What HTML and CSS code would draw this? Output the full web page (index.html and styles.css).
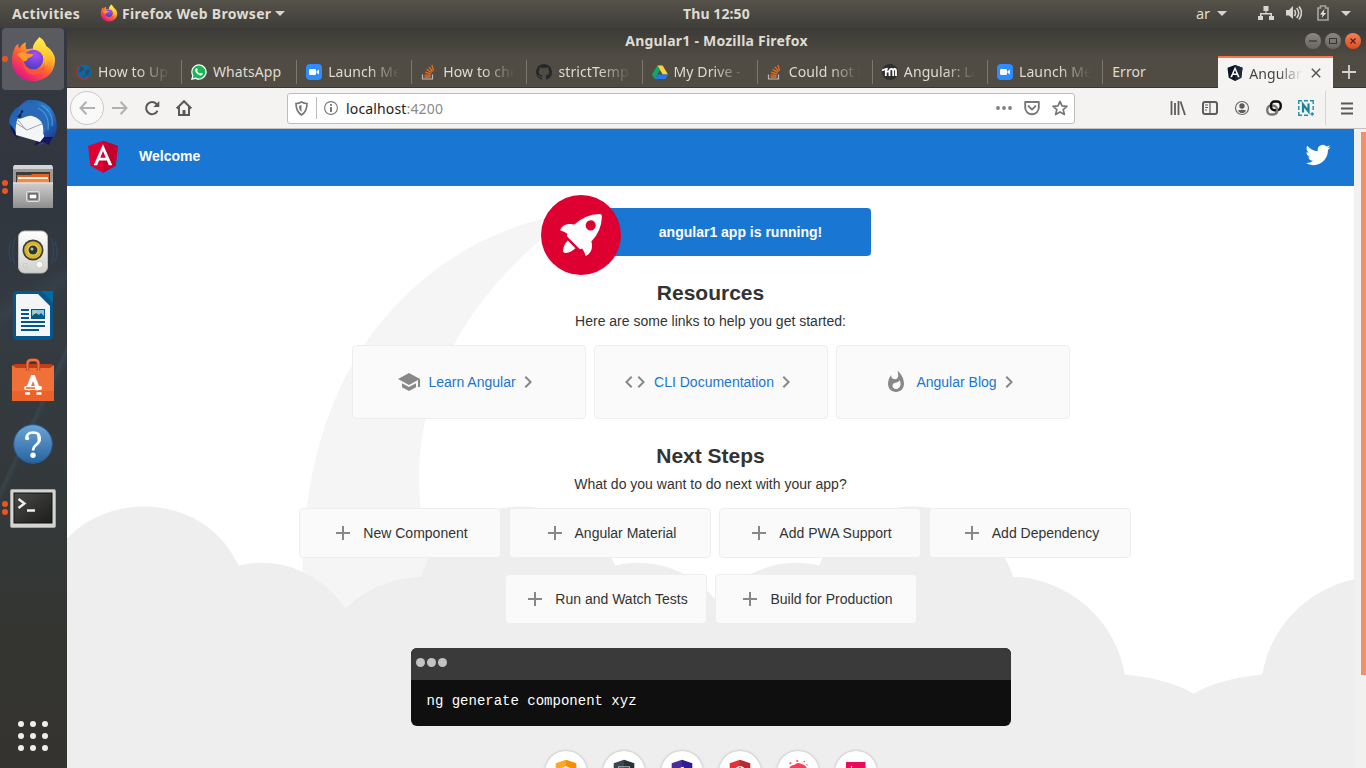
FILE: index.html
```html
<!DOCTYPE html>
<html lang="en">
<head>
<meta charset="utf-8">
<title>Angular1</title>
<link rel="stylesheet" href="styles.css">
</head>
<body>
<svg class="defs" width="0" height="0">
  <defs>
    <linearGradient id="ff-body" x1=".85" y1=".1" x2=".25" y2=".95"><stop offset="0" stop-color="#fff14a"/><stop offset=".3" stop-color="#ffb32c"/><stop offset=".6" stop-color="#ff5a36"/><stop offset="1" stop-color="#e31587"/></linearGradient>
    <linearGradient id="ff-flame" x1=".5" y1="0" x2=".5" y2="1"><stop offset="0" stop-color="#fff44f"/><stop offset=".6" stop-color="#ffc52c"/><stop offset="1" stop-color="#ff8a25"/></linearGradient>
    <radialGradient id="ff-globe" cx=".6" cy=".25" r=".8"><stop offset="0" stop-color="#a94dff"/><stop offset="1" stop-color="#4a3fb8"/></radialGradient>
    <linearGradient id="tb-blue" x1="0" y1="0" x2="1" y2="1"><stop offset="0" stop-color="#1a4d9a"/><stop offset=".5" stop-color="#2b7fd0"/><stop offset="1" stop-color="#1b2a80"/></linearGradient>
    <linearGradient id="metal" x1="0" y1="0" x2="0" y2="1"><stop offset="0" stop-color="#cfcfcf"/><stop offset="1" stop-color="#8e8e8e"/></linearGradient>
    <linearGradient id="white-box" x1="0" y1="0" x2="0" y2="1"><stop offset="0" stop-color="#fff"/><stop offset="1" stop-color="#cfcfcb"/></linearGradient>
    <linearGradient id="help-blue" x1="0" y1="0" x2="0" y2="1"><stop offset="0" stop-color="#6ba4d6"/><stop offset="1" stop-color="#2763a0"/></linearGradient>
    <linearGradient id="term" x1="0" y1="0" x2="1" y2="1"><stop offset="0" stop-color="#4a4a48"/><stop offset="1" stop-color="#1c1c1b"/></linearGradient>
    <symbol id="firefox" viewBox="0 0 48 48">
      <path fill="url(#ff-body)" d="M4.500 13C6 10 8 9 8.500 8.500c0 2 .2 3.500.8 5 2-3.500 5-6 7-6.500-.8 2.500-.5 5 .5 7L25 13 30 1.500c5 3 6 7 7.500 10 3 1 7 6 8.300 11 1.500 14-8.500 24-22 24C11.500 46.500 2 37.500 2 26c0-5 1-9 2.500-13z"/>
      <path fill="url(#ff-flame)" d="M30 1.500c-1.500 2.500-7.500 7-6.500 13 4 0 8 2 9.500 6 2.500 6-1 12-6 14 9-1 14-7 13.800-14 2 2 2.500 4 2.700 6 1-7-3-13-6-15-3-2-7-5.500-7.500-10z"/>
      <circle cx="24" cy="24.500" r="10" fill="url(#ff-globe)"/>
      <path fill="#ff9a27" d="M7 20c3-3 7-3.500 9.500-1.800 1 .5 5 .6 7.500 1-.3 2-4 3.500-6 4.200 0 2-2 3-4.500 3-2-3-4-5-6.500-6.400z"/>
      <path fill="#ff5a36" opacity=".75" d="M13.500 26c1 6 6 9.500 12 9 6-.3 9-4 9.500-8 2 8-4 14-12 13-7-1-10-8-9.500-14z"/>
    </symbol>
    <symbol id="zoomus" viewBox="0 0 16 16"><rect width="16" height="16" rx="4" fill="#2d8cff"/><rect x="3" y="5" width="7" height="6" rx="1.300" fill="#fff"/><path d="M10.500 7.300 13 5.500v5l-2.500-1.800z" fill="#fff"/></symbol>
    <symbol id="overflow" viewBox="0 0 16 16"><path d="M1.500 10.500V15h10v-4.500" fill="none" stroke="#bcbbb8" stroke-width="1.200"/><g stroke="#f06a14" stroke-width="1.300"><path d="M3.500 13h6M3.600 10.800l6 .6M4.200 8.200l5.700 1.700M5.700 5.400l5 3.100M8 2.900l3.500 4.700M10.800 1l1.800 5.600"/></g></symbol>
    <symbol id="plus" viewBox="0 0 24 24"><path fill="#888" d="M19 13h-6v6h-2v-6H5v-2h6V5h2v6h6v2z"/></symbol>
    <symbol id="chevron" viewBox="0 0 24 24"><path fill="#888" d="M10 6L8.590 7.410 13.170 12l-4.580 4.590L10 18l6-6z"/></symbol>
  </defs>
</svg>

<header class="topbar">
  <div class="top-left">
    <span class="activities">Activities</span>
    <span class="app-menu"><svg width="18" height="18"><use href="#firefox"/></svg><span class="app-name">Firefox Web Browser</span><i class="caret"></i></span>
  </div>
  <span class="clock">Thu 12:50</span>
  <div class="status">
    <span class="lang">ar</span><i class="caret"></i>
    <svg class="s-net" width="16" height="16" fill="#d8d6d2"><path d="M5.500 1h5v5h-2v2H14v3h2v4h-5v-4h1.500V9.500h-9V11H5v4H0v-4h2V8h5.500V6h-2z"/></svg>
    <svg class="s-vol" width="16" height="16" fill="#d8d6d2"><path d="M0 5h3l4-4v13L3 10.500H0z"/><path d="M8.500 5q2 3 0 6M10.700 3q4 5 0 10M13 1.500q5 6 0 13" fill="none" stroke="#d8d6d2" stroke-width="1.500"/></svg>
    <svg class="s-bat" width="12" height="16"><path d="M1 3h2.500V1h5v2H11v12H1z" fill="none" stroke="#a5a39d" stroke-width="1.700"/><path d="M7.500 4 3 9.500h2.500L4.500 13 9.200 8H6.700z" fill="#e6e4e0"/></svg>
    <i class="caret"></i>
  </div>
</header>

<div class="desktop">
  <nav class="dock">
    <div class="app active one"><svg width="47" height="48"><use href="#firefox"/></svg></div>
    <div class="app"><svg width="50" height="50" viewBox="0 0 50 50">
      <path fill="url(#tb-blue)" d="M12 8C16 3 20 1 22 2c13-1 25 7 26.500 22C50 34 46 39 42 46l-6-1-5 3 1-8-22-5C2 32 0 24 2 19 5 12 9 9 12 8z"/>
      <path fill="#1b1658" d="M2 26c1 8 5 12 8 15l-1-6zM31 39l-5 9 9-4 6 3 4-8z"/>
      <path fill="#f4f5f7" d="M10 19c5 0 8-3 13-4l13 6v18l-4 5-24-7c-1-6 0-12 2-18z"/>
      <path d="M8 25l11 7 17-7M10 22l8 10" fill="none" stroke="#9ca0a7" stroke-width="1"/>
      <path fill="#2a68b8" d="M12 8c4-4 11-5 15-1 9 1 14 7 14 15 0 6-3 11-6 15 1-9 0-16-11-19-5-1-8 3-15 3 0-5 1-9 3-13z"/><circle cx="14" cy="13.500" r="1.300" fill="#071b49"/><path d="M9 19l5-6-1 7z" fill="#14243f"/>
      <path d="M30 10q12 6 10 22M33 7q13 7 11 21" stroke="#3f9ddc" fill="none" stroke-width="1.200"/></svg></div>
    <div class="app two"><svg width="44" height="46" viewBox="0 0 44 46">
      <path d="M2 2h40v42H2z" fill="#9a9a9a"/><path d="M3 1h38l1 4H2z" fill="#d4d4d4"/><rect x="5" y="8" width="34" height="12" fill="#3c3b38"/>
      <path d="M6 11h14l1-1h17v9H6z" fill="#e2641f"/><path d="M7 13h30v6H7z" fill="#f7efe4"/><path d="M6 15h32v4H6z" fill="#f08a42"/>
      <path d="M2 18.500h40V44H2z" fill="url(#metal)"/><path d="M2 19h40" stroke="#e8e8e8"/><rect x="15.500" y="27.500" width="13" height="10" rx="1.500" fill="#a8a8a8" stroke="#ddd"/><rect x="18" y="30" width="8" height="5" fill="#fff" stroke="#333"/></svg></div>
    <div class="app"><svg width="50" height="44" viewBox="0 0 50 44">
      <path d="M7 8q-5 14 0 27M3 11q-4 11 0 21M43 8q5 14 0 27M47 11q4 11 0 21" fill="none" stroke="#315d87" stroke-width="1.300" opacity=".4"/>
      <rect x="10.500" y="1" width="29" height="42" rx="6" fill="url(#white-box)" stroke="#b9b9b5"/><circle cx="25" cy="20" r="10.500" fill="#3c3c3b"/><circle cx="25" cy="20" r="8.800" fill="#d5b52d"/><circle cx="25" cy="20" r="5.500" fill="#efe05f"/><circle cx="25" cy="20" r="4.500" fill="#2f3434"/><circle cx="24" cy="19" r="1.500" fill="#b2c0c5"/><circle cx="31.500" cy="34.500" r="3.500" fill="#f8f8f6" stroke="#ccc"/><rect x="15.500" y="33.500" width="4" height="4" fill="none" stroke="#ccc"/></svg></div>
    <div class="app"><svg width="40" height="49" viewBox="0 0 40 49">
      <path d="M3 0h25l12 12v33q0 4-4 4H4q-4 0-4-4V3q0-3 3-3z" fill="#04568f"/><path d="M28 0h12v12z" fill="#0369a3"/><path d="M4 3h21l12 12v30H3V4z" fill="#f3f5f6"/><g fill="#04568f"><path d="M8 18h8v2H8zM8 22h8v2H8zM8 26h8v2H8zM8 30h24v2H8zM8 34h24v2H8zM8 38h18v2H8z"/><path d="M18 18h14v10H18z"/></g><path d="M19 19h12v8H19z" fill="#86c8ec"/><path d="M19 27v-2l4-3 3 2 2-2 3 3v2z" fill="#075a80"/><circle cx="22" cy="21" r="1.300" fill="#f7d13b"/></svg></div>
    <div class="app"><svg width="42" height="44" viewBox="0 0 42 44">
      <path d="M0 8l3-2h36l3 2v4H0z" fill="#c23e16"/><path d="M0 7l4 3h34l4-3v36H0z" fill="#f0703a"/><path d="M0 33h42v10H0z" fill="#ed6228"/><path d="M15.500 13V6q0-4 4-4h3q4 0 4 4v7" fill="none" stroke="#b8401b" stroke-width="3.400"/><path d="M15.500 13V6q0-4 4-4h3q4 0 4 4v7" fill="none" stroke="#f07646" stroke-width="1.800"/>
      <path d="M15.500 32l5-13h1l5 13" fill="none" stroke="#fff" stroke-width="3.800"/><path d="M14 30h14" stroke="#fff" stroke-width="4" stroke-linecap="round"/><path d="M14 30h9" stroke="#f06b35" stroke-width="1.600"/><path d="M13 35.500h5M24.500 35.500h5" stroke="#fff" stroke-width="2.600"/></svg></div>
    <div class="app"><svg width="40" height="40" viewBox="0 0 40 40"><circle cx="20" cy="20" r="19.300" fill="url(#help-blue)" stroke="#285d93"/><path d="M13.500 15.500q-.5-7 6.800-7 6.500 0 6.500 6 0 3.600-3.500 6.200-3.300 2.600-3.200 5.800" fill="none" stroke="#fff" stroke-width="2.600"/><circle cx="14.200" cy="14.200" r="2" fill="#fff"/><path d="M24 9.500q3.800 1.500 3.700 5.200-.2 3-2.700 5.300z" fill="#fff"/><circle cx="20" cy="31.300" r="2.700" fill="#fff"/></svg></div>
    <div class="app two"><svg width="46" height="39" viewBox="0 0 46 39"><rect x=".5" y=".5" width="45" height="38" rx="1.500" fill="#d4d4d1" stroke="#a4a4a0"/><rect x="4" y="4" width="38" height="30" fill="url(#term)" stroke="#111"/><path d="M8.500 10l6 4.500-6 4.500M17 21.500h8" fill="none" stroke="#f0f0ee" stroke-width="2.300"/></svg></div>
    <div class="grid-btn"><i></i><i></i><i></i><i></i><i></i><i></i><i></i><i></i><i></i></div>
  </nav>

  <section class="window">
    <div class="titlebar"><span class="win-title">Angular1 - Mozilla Firefox</span>
      <div class="win-buttons"><b><svg width="16" height="16"><path d="M4 8h8" stroke="#35342f" stroke-width="1.200"/></svg></b><b><svg width="16" height="16"><rect x="4.500" y="5.500" width="7" height="5" fill="none" stroke="#35342f"/></svg></b><b class="close"><svg width="16" height="16"><path d="M5.500 5.500l5 5m0-5l-5 5" stroke="#45281c" stroke-width="1.200"/></svg></b></div>
    </div>
    <div class="tabs">
      <div class="tab first"><svg width="16" height="16"><circle cx="8.500" cy="8" r="7.200" fill="#0b69a8"/><path d="M4 3q3-1 4 1T5 8 3 7M10 6q4-2 4 1t-3 5q-3-2-1-6M6 10l3 2-1 2z" fill="#2b4c63"/><path d="M5.500 1A7.400 7.400 0 0 0 8 15.300q3 0 5-1.500" fill="none" stroke="#c0272d" stroke-width="1.200"/></svg><span>How to Upd</span></div>
      <div class="tab"><svg width="16" height="16"><path d="M8 .2A7.800 7.800 0 1 1 4.500 15L0 16l1.200-4.300A7.800 7.800 0 0 1 8 .2z" fill="#fff"/><path d="M8 1.400A6.500 6.500 0 1 1 4.700 13.600L1.700 14.300l.8-2.900A6.500 6.500 0 0 1 8 1.400z" fill="#14b955"/><path d="M5.700 4.200c.6 0 .8.900 1 1.600.2.500-.3.800-.6 1.200.7 1.300 1.500 2 2.800 2.500.5-.5.700-1 1.200-.8l1.600.8c.3.900-1 2-2 2C7 11.300 4.300 8.300 4.200 6.300c0-1 .7-2.100 1.500-2.100z" fill="#fff"/></svg><span>WhatsApp</span></div>
      <div class="tab"><svg width="16" height="16"><use href="#zoomus"/></svg><span>Launch Mee</span></div>
      <div class="tab"><svg width="16" height="16"><use href="#overflow"/></svg><span>How to che</span></div>
      <div class="tab"><svg width="16" height="16"><path fill="#24292e" d="M8 0C3.580 0 0 3.580 0 8c0 3.540 2.290 6.530 5.470 7.590.4.070.55-.17.55-.38 0-.19-.01-.82-.01-1.490-2.010.37-2.530-.49-2.690-.94-.09-.23-.48-.94-.82-1.130-.28-.15-.68-.52-.01-.53.63-.01 1.080.58 1.230.82.72 1.210 1.870.87 2.330.66.07-.52.28-.87.51-1.070-1.780-.2-3.640-.89-3.640-3.950 0-.87.31-1.590.82-2.150-.08-.2-.36-1.020.08-2.120 0 0 .67-.21 2.200.82a7.640 7.640 0 0 1 4 0c1.530-1.040 2.200-.82 2.200-.82.44 1.100.16 1.920.08 2.120.51.56.82 1.270.82 2.150 0 3.070-1.870 3.750-3.650 3.950.29.25.54.73.54 1.480 0 1.070-.01 1.930-.01 2.200 0 .21.15.46.55.38A8.010 8.010 0 0 0 16 8c0-4.420-3.580-8-8-8z"/></svg><span>strictTempl</span></div>
      <div class="tab"><svg width="16" height="16"><path d="M5.400 1.500h5.200L16 10.500h-5.300z" fill="#ffcf48"/><path d="M5.400 1.500 8 6 2.700 15 0 10.500z" fill="#11a861"/><path d="M5.400 10.500H16L13.300 15H2.700z" fill="#2679e8"/></svg><span>My Drive - G</span></div>
      <div class="tab"><svg width="16" height="16"><use href="#overflow"/></svg><span>Could not f</span></div>
      <div class="tab"><svg width="16" height="16"><circle cx="8" cy="8" r="8" fill="#302f2d"/><path d="M0 6.500 5 4.500M3.800 12V7q0-2 2-2.500M4.500 7.500h3M7.500 12V7q0-2 1.800-2t1.900 2v5M11.200 7q0-2 1.400-2t1.400 2v5" fill="none" stroke="#fff" stroke-width="1.800"/></svg><span>Angular: La</span></div>
      <div class="tab"><svg width="16" height="16"><use href="#zoomus"/></svg><span>Launch Mee</span></div>
      <div class="tab error"><span>Error</span></div>
      <div class="tab selected"><svg width="16" height="16" viewBox="0 0 16 16"><path d="M8 0l7.500 2.700-1.200 10L8 16l-6.300-3.300-1.200-10z" fill="#0c1422"/><path d="M8 0l7.500 2.700-1.200 10L8 16z" fill="#1c2938"/><path fill="#fff" d="M8 1.800l4.700 10.500h-1.800l-.9-2.400H6l-.9 2.400H3.300zM8 5 6.600 8.400h2.800z"/></svg><span>Angular</span><svg class="x" width="10" height="10"><path d="M.8.8l8.400 8.400m0-8.400L.8 9.200" stroke="#555" stroke-width="1.500"/></svg></div>
      <div class="newtab"><svg width="14" height="14"><path d="M7 0v14M0 7h14" stroke="#d6d4cf" stroke-width="1.800"/></svg></div>
    </div>
    <div class="navbar">
      <div class="cell back"><svg width="16" height="14" fill="none" stroke="#b2b1b0" stroke-width="2"><path d="M16 7H1.500M7.500.8 1.500 7l6 6.200"/></svg></div>
      <div class="cell"><svg width="16" height="14" fill="none" stroke="#b2b1b0" stroke-width="2"><path d="M0 7h14.500M8.500.8l6 6.200-6 6.200"/></svg></div>
      <div class="cell"><svg width="16" height="16"><path d="M13.500 10.800A6 6 0 1 1 12.500 4L14 5.500" fill="none" stroke="#5a5957" stroke-width="2"/><path d="M15.300 1v6H9.300z" fill="#5a5957"/></svg></div>
      <div class="cell"><svg width="16" height="16" fill="none" stroke="#5a5957" stroke-width="2"><path d="M.7 8.500 8 1.200l7.300 7.300M3 7v8h10V7"/><path d="M8 14v-4" stroke-width="3"/></svg></div>
      <div class="urlbar">
        <svg class="u-shield" width="13" height="15"><path d="M6.500 1q2.500 1.500 5.500 1.500 0 8-5.500 11.500Q1 10.500 1 2.500 4 2.500 6.500 1z" fill="none" stroke="#777" stroke-width="1.700"/><path d="M6.500 4v7q-2.500-2-2.700-6z" fill="#777"/></svg>
        <i class="u-sep"></i>
        <svg class="u-info" width="14" height="14"><circle cx="7" cy="7" r="6.400" fill="none" stroke="#777" stroke-width="1.100"/><path d="M6 3h2v1.800H6zM6 6h2v5H6z" fill="#777"/></svg>
        <span class="url">localhost<em>:4200</em></span>
        <svg width="16" height="16" fill="#808080"><circle cx="2" cy="8" r="1.900"/><circle cx="8" cy="8" r="1.900"/><circle cx="14" cy="8" r="1.900"/></svg>
        <svg width="16" height="15" fill="none" stroke="#777" stroke-width="1.900"><path d="M1.200 1h13.600v5.500a6.800 6.800 0 0 1-13.600 0zM4.500 5.200 8 8.700l3.500-3.500" stroke-linejoin="round" stroke-linecap="round"/></svg>
        <svg width="16" height="16"><path d="M8 1.300l2 4.600 5 .4-3.800 3.300 1.200 4.900L8 11.900l-4.400 2.600 1.200-4.900L1 6.300l5-.4z" fill="none" stroke="#777" stroke-width="1.700" stroke-linejoin="round"/></svg>
      </div>
      <div class="tools">
        <div class="cell"><svg width="16" height="16"><path d="M1.500 1v14M5 3v12M8.500 1v14M10.500 1.500 15 15" stroke="#5d5c5a" stroke-width="1.800"/></svg></div>
        <div class="cell"><svg width="16" height="16"><rect x="1" y="2" width="14" height="12" rx="2" fill="none" stroke="#5d5c5a" stroke-width="2"/><path d="M8 2v12M3 5h3M3 7.500h3M3 10h2" stroke="#5d5c5a" stroke-width="1.200"/></svg></div>
        <div class="cell"><svg width="16" height="16"><circle cx="8" cy="8" r="6.500" fill="none" stroke="#6d6c6a" stroke-width="1.200"/><circle cx="8" cy="6" r="2.700" fill="#5d5c5a"/><path d="M4 10.200q4-.8 8 0-1 2.800-4 2.800t-4-2.800z" fill="#5d5c5a"/></svg></div>
        <div class="cell"><svg width="16" height="16" fill="none" stroke-width="2.400"><rect x="1.300" y="5.800" width="9.700" height="8.700" rx="3.500" stroke="#777"/><rect x="5" y="1.500" width="9.700" height="8.700" rx="3.500" stroke="#0d0d0d"/><path d="M11 8v3.200q-.2 1.500-1 2.300" stroke="#777"/></svg></div>
        <div class="cell"><svg width="16" height="16"><path d="M.8 4V.8H4M6 .8h4M12 .8h3.200V4M.8 6v4M.8 12v3.200H4M6 15.200h4M15.200 6v4M12.500 14h3.500M14.200 12.200v3.600" fill="none" stroke="#1594a7" stroke-width="1.400"/><path d="M5 12.500V4.500l5.500 7v-8" fill="none" stroke="#1b8299" stroke-width="2.200"/></svg></div>
        <i class="t-sep"></i>
        <div class="cell"><svg width="12" height="13"><path d="M0 1.500h12M0 6.500h12M0 11.500h12" stroke="#5a5957" stroke-width="1.900"/></svg></div>
      </div>
    </div>

    <div class="viewport">
      <main class="page">
        <svg class="clouds" width="1920" height="486" viewBox="0 0 2611.084 485.677"><path transform="translate(142.690 -634.312)" fill="#eee" d="M2379.709,863.793c10-93-77-171-168-149-52-114-225-105-264,15-75,3-140,59-152,133-30,2.830-66.725,9.829-93.500,26.250-26.771-16.421-63.500-23.420-93.500-26.250-12-74-77-130-152-133-39-120-212-129-264-15-54.084-13.075-106.753,9.173-138.488,48.900-31.734-39.726-84.400-61.974-138.487-48.900-52-114-225-105-264,15a162.027,162.027,0,0,0-103.147,43.044c-30.633-45.365-87.100-72.091-145.206-58.044-52-114-225-105-264,15-75,3-140,59-152,133V1120H2380z"/></svg>
        <div class="appbar">
          <svg class="logo" width="40" height="40" viewBox="0 0 250 250"><path fill="#dd0031" d="M125 30 31.900 63.200l14.200 123.100L125 230l78.900-43.700 14.200-123.100z"/><path fill="#c3002f" d="M125 30v200l78.900-43.700 14.200-123.100z"/><path fill="#fff" d="M125 52.100 66.800 182.600h21.700l11.700-29.200h49.400l11.700 29.200H183L125 52.100zm17 83.300h-34l17-40.900z"/></svg>
          <span>Welcome</span>
          <svg class="twitter" width="40" height="40" viewBox="0 0 400 400"><path fill="#fff" d="M153.620,301.590c94.340,0,145.940-78.160,145.940-145.940,0-2.220,0-4.430-.15-6.630A104.360,104.360,0,0,0,325,122.470a102.380,102.380,0,0,1-29.460,8.070,51.470,51.470,0,0,0,22.550-28.370,102.790,102.790,0,0,1-32.570,12.450,51.340,51.340,0,0,0-87.410,46.780A145.620,145.620,0,0,1,92.400,107.810a51.330,51.330,0,0,0,15.880,68.470A50.910,50.910,0,0,1,85,169.860c0,.21,0,.43,0,.65a51.310,51.310,0,0,0,41.150,50.280,51.210,51.210,0,0,1-23.160.88,51.350,51.350,0,0,0,47.920,35.620,102.920,102.920,0,0,1-63.700,22A104.410,104.410,0,0,1,75,278.550a145.210,145.210,0,0,0,78.620,23"/></svg>
        </div>
        <div class="content">
          <div class="banner">
            <svg class="smoke" width="516" height="544" viewBox="0 0 516.119 1083.632"><path d="M644.600,141S143.020,215.537,147.049,870.207s342.774,201.755,342.774,201.755S404.659,847.213,388.815,762.200c-27.116-145.510-11.551-384.124,271.900-609.100C671.150,139.365,644.600,141,644.600,141Z" transform="translate(-147.020 -140.939)" fill="#f5f5f5"/></svg>
            <svg class="rocket" width="80" height="80" viewBox="0 0 101.678 101.678"><circle cx="50.839" cy="50.839" r="50.839" fill="#dd0031"/><g transform="translate(24.185 24.185)" fill="#fff"><path d="M3.400,42.615a3.084,3.084,0,0,0,3.553,3.553,21.419,21.419,0,0,0,12.215-6.107L9.511,30.400A21.419,21.419,0,0,0,3.400,42.615Z" transform="translate(.371 3.363)"/><path d="M53.300,3.221A3.090,3.090,0,0,0,50.081,0,48.227,48.227,0,0,0,18.322,13.437c-6-1.666-14.991-1.221-18.322,7.218A33.892,33.892,0,0,1,9.439,25.100l-.333.666a3.013,3.013,0,0,0,.555,3.553L23.985,43.641a2.900,2.900,0,0,0,3.553.555l.666-.333A33.892,33.892,0,0,1,32.647,53.300c8.550-3.664,8.884-12.326,7.218-18.322A48.227,48.227,0,0,0,53.300,3.221ZM34.424,9.772a6.439,6.439,0,1,1,9.106,9.106,6.368,6.368,0,0,1-9.106,0A6.467,6.467,0,0,1,34.424,9.772Z"/></g></svg>
            <span>angular1 app is running!</span>
          </div>
          <h2>Resources</h2>
          <p>Here are some links to help you get started:</p>
          <div class="cards">
            <a class="card"><svg width="24" height="24"><path fill="#888" d="M5 13.180v4L12 21l7-3.820v-4L12 17l-7-3.820zM12 3L1 9l11 6 9-4.910V17h2V9L12 3z"/></svg><span>Learn Angular</span><svg width="24" height="24"><use href="#chevron"/></svg></a>
            <a class="card"><svg width="24" height="24"><path fill="#888" d="M9.400 16.600L4.800 12l4.600-4.600L8 6l-6 6 6 6 1.400-1.400zm5.200 0l4.600-4.600-4.600-4.600L16 6l6 6-6 6-1.400-1.400z"/></svg><span>CLI Documentation</span><svg width="24" height="24"><use href="#chevron"/></svg></a>
            <a class="card blog"><svg width="24" height="24"><path fill="#888" d="M13.500.67s.74 2.650.74 4.800c0 2.060-1.350 3.730-3.410 3.730-2.070 0-3.630-1.670-3.630-3.730l.03-.36C5.210 7.510 4 10.620 4 14c0 4.420 3.580 8 8 8s8-3.580 8-8C20 8.610 17.410 3.800 13.500.67zM11.710 19c-1.780 0-3.220-1.400-3.220-3.140 0-1.620 1.050-2.760 2.810-3.120 1.770-.36 3.600-1.210 4.620-2.580.39 1.290.59 2.650.59 4.040 0 2.650-2.150 4.800-4.800 4.800z"/></svg><span>Angular Blog</span><svg width="24" height="24"><use href="#chevron"/></svg></a>
          </div>
          <h2 class="next">Next Steps</h2>
          <p>What do you want to do next with your app?</p>
          <div class="steps four">
            <a class="step"><svg width="24" height="24"><use href="#plus"/></svg><span>New Component</span></a>
            <a class="step"><svg width="24" height="24"><use href="#plus"/></svg><span>Angular Material</span></a>
            <a class="step"><svg width="24" height="24"><use href="#plus"/></svg><span>Add PWA Support</span></a>
            <a class="step"><svg width="24" height="24"><use href="#plus"/></svg><span>Add Dependency</span></a>
          </div>
          <div class="steps">
            <a class="step"><svg width="24" height="24"><use href="#plus"/></svg><span>Run and Watch Tests</span></a>
            <a class="step"><svg width="24" height="24"><use href="#plus"/></svg><span>Build for Production</span></a>
          </div>
          <div class="terminal"><div class="term-head"><i></i><i></i><i></i></div><pre>ng generate component xyz</pre></div>
          <div class="links">
            <a><svg width="22" height="25" viewBox="0 0 32 34"><path d="M16 0 1 5v25h15z" fill="#ffa726"/><path d="M16 0l15 5v25H16z" fill="#fb8c00"/><path d="M16 9l8 4v10l-8 4-8-4V13z" fill="#fff"/></svg></a>
            <a><svg width="22" height="25" viewBox="0 0 32 34"><path d="M16 0 1 5v25h15z" fill="#37474f"/><path d="M16 0l15 5v25H16z" fill="#263238"/><path d="M8 10h16v13H8zM11 14h10" fill="none" stroke="#aab4b8" stroke-width="1.500"/></svg></a>
            <a><svg width="22" height="25" viewBox="0 0 32 34"><path d="M16 0 1 5v25h15z" fill="#4b2c96"/><path d="M16 0l15 5v25H16z" fill="#311b92"/><path d="M19 10q-7 0-7 6 0 7 8 9-4-4-3-9z" fill="#fff"/></svg></a>
            <a><svg width="22" height="25" viewBox="0 0 32 34"><path d="M16 0 1 5v25h15z" fill="#e53136"/><path d="M16 0l15 5v25H16z" fill="#b42b32"/><circle cx="16" cy="17" r="8" fill="#fff"/><path d="M16 10v7" stroke="#e53136" stroke-width="2"/></svg></a>
            <a><svg width="22" height="25" viewBox="0 0 32 34" fill="#f93e5c"><path d="M3 15q0-7 8-8 4-4 10-1 7 1 9 10l-3-3q0 14-11 14Q5 26 5 14z"/><circle cx="5" cy="5" r="1.500"/><circle cx="15" cy="1.800" r="1.500"/><circle cx="25" cy="2.500" r="1.200"/><circle cx="29" cy="7" r="1"/><path d="M9 17l3-4 4 5 4-5 4 4v6H9z" fill="#fff"/></svg></a>
            <a><svg width="20" height="22" viewBox="0 0 20 22"><path d="M0 1h19.500v20H0z" fill="#ea0a5c"/><path d="M5.500 5v8M9 7.500 5.500 10 9 13M11 13V8.500q3-2 4 0V13" fill="none" stroke="#fff" stroke-width="1.200"/></svg></a>
          </div>
        </div>
      </main>
      <div class="scrollbar"><i></i></div>
    </div>
  </section>
</div>
</body>
</html>
```
FILE: styles.css
```css
* { box-sizing: border-box; }
html, body { margin: 0; height: 100%; overflow: hidden; }
body { width: 1366px; height: 768px; font-family: "Noto Sans", "Open Sans", sans-serif; background: #fff; }
svg { display: block; flex: none; }
.defs { position: absolute; }
i, em { font-style: normal; }

.topbar { height: 28px; display: grid; grid-template-columns: 683px 1fr auto; align-items: center; background: linear-gradient(#55524a, #3f3e39); color: #dfdbd2; font-size: 14px; font-weight: 700; padding-bottom: 2px; }
.top-left { display: flex; align-items: center; padding-left: 12px; }
.activities { width: 88px; letter-spacing: .3px; }
.app-menu { display: flex; align-items: center; }
.app-name { margin: 0 4px 0 4px; letter-spacing: .32px; }
.clock { letter-spacing: .1px; }
.status { display: flex; align-items: center; justify-content: flex-end; padding-right: 15px; }
.lang { font-weight: 400; font-size: 14.500px; margin-right: 7px; }
.caret { border: 5px solid transparent; border-top-color: #d6d4ce; border-bottom: 0; flex: none; }
.s-net { margin-left: 31px; }
.s-vol { margin-left: 12px; }
.s-bat { margin-left: 15px; }
.status > .caret:last-child { margin-left: 12px; }

.desktop { display: flex; height: 740px; }
.dock { width: 67px; flex: none; background: linear-gradient(115deg, transparent 52%, rgba(75,105,130,.22) 52.500%, transparent 54%), linear-gradient(150deg, transparent 35%, rgba(65,90,105,.2) 37%, transparent 39%), linear-gradient(#343740, #30363f 22%, #343b41 42%, #33393b 62%, #343531 82%, #343330); display: flex; flex-direction: column; align-items: flex-start; gap: 2.200px; }
.app { width: 62px; height: 62px; margin-left: 2px; border-radius: 4px; display: flex; align-items: center; justify-content: center; position: relative; flex: none; }
.active { background: #595b60; }
.one::before, .two::before, .two::after { content: ""; position: absolute; left: 0; top: 28px; width: 6px; height: 6px; border-radius: 50%; background: #e95420; }
.two::before { top: 24px; }
.two::after { top: 32px; }
.grid-btn { margin: auto 0 17px 18px; display: grid; grid-template-columns: repeat(3, 6px); gap: 6px; }
.grid-btn i { width: 6px; height: 6px; border-radius: 50%; background: #eee; }

.window { flex: 1; min-width: 0; display: flex; flex-direction: column; }
.titlebar { height: 28px; background: linear-gradient(#3b3a36, #4e4b43); color: #dfdbd2; display: grid; grid-template-columns: 1fr auto 1fr; align-items: center; font-size: 14px; font-weight: 700; padding-bottom: 3px; }
.win-title { grid-column: 2; letter-spacing: .22px; }
.win-buttons { display: flex; gap: 4px; justify-content: flex-end; padding-right: 5px; }
.win-buttons b { width: 16px; height: 16px; border-radius: 50%; background: linear-gradient(#8a877e, #68665f); }
.win-buttons .close { background: linear-gradient(#f4805a, #df4b1e); }

.tabs { height: 32px; background: #504c44; border-bottom: 1px solid #383732; display: flex; color: #dfdbd2; font-size: 14px; letter-spacing: .1px; }
.tab { width: 115.150px; flex: none; display: flex; align-items: center; padding: 0 10px 0 10px; gap: 6px; background: linear-gradient(#79766e, #79766e) 0 4px / 1px 24px no-repeat; }
.tab span { flex: 1; min-width: 0; white-space: nowrap; overflow: hidden; -webkit-mask-image: linear-gradient(90deg, #000 55%, transparent 98%); mask-image: linear-gradient(90deg, #000 55%, transparent 98%); }
.tab:nth-child(2) span, .tab.error span { -webkit-mask-image: none; mask-image: none; }
.tab.first { background: none; width: 114px; padding-left: 9px; }
.tab.error { width: 116px; }
.tab.selected { width: 114.500px; height: 32px; padding-left: 9px; background: #f5f4f3; border-top: 2px solid #f07746; color: #444; }
.tab.selected .x { margin-left: 2px; margin-right: 2px; }
.newtab { flex: 1; display: flex; align-items: center; justify-content: center; }

.navbar { height: 41px; background: #f4f3f2; border-bottom: 1px solid #c4c2c0; display: flex; align-items: center; padding: 0 3px 0 4px; }
.cell { width: 32px; height: 32px; display: flex; align-items: center; justify-content: center; flex: none; }
.back { width: 34px; height: 34px; margin: 0 0 0 -1px; border-radius: 50%; border: 1px solid #cac9c7; background: #faf9f9; }
.urlbar { width: 788px; height: 31px; margin-left: 87px; background: #fff; border: 1px solid #c0bebc; border-radius: 3px; display: flex; align-items: center; padding: 0 6px 0 7px; gap: 12px; }
.u-shield { margin-right: -4px; }
.u-sep { width: 1px; height: 22px; background: #bbb; }
.u-info { margin: 0 -4px 0 -5px; }
.url { flex: 1; font-size: 14px; color: #222; letter-spacing: .15px; }
.url em { color: #8a8a8a; }
.tools { margin-left: auto; display: flex; align-items: center; }
.t-sep { width: 1px; height: 34px; background: #d8d6d4; margin: 0 5px 0 3px; }

.viewport { flex: 1; min-height: 0; display: flex; }
.page { width: 1287px; position: relative; overflow: hidden; z-index: 0; background: #fff; font: 14px/16px "Liberation Sans", Arial, sans-serif; color: #333; }
.clouds { position: absolute; left: -230px; bottom: -160px; z-index: -1; }
.appbar { height: 57px; background: #1976d2; color: #fff; display: flex; align-items: center; font-weight: 700; padding: 0 16px; }
.appbar span { margin: 0 auto 3px 16px; }
.appbar .logo { margin-bottom: 3px; }
.appbar .twitter { margin: 0 0 5px; }
.content { display: flex; flex-direction: column; align-items: center; padding-top: 22px; }
.banner { position: relative; width: 320px; height: 48px; margin-left: 1px; background: #1976d2; border-radius: 4px; color: #fff; font-weight: 700; display: flex; align-items: center; justify-content: center; padding-left: 59px; }
.smoke { position: absolute; right: 181.500px; top: 9px; z-index: -2; }
.rocket { position: absolute; left: -10px; top: -13.500px; }
h2 { margin: 25px 0 0; font-size: 21px; line-height: 24px; }
p { margin: 8px 0 16px; }
.cards, .steps { display: flex; gap: 8px; margin-left: 1px; }
.card, .step { background: #fafafa; border: 1px solid #eee; border-radius: 4px; display: flex; align-items: center; justify-content: center; }
.card { width: 234px; height: 74px; color: #1976d2; padding-right: 1px; }
.card span { margin-left: 7px; }
.card.blog span { margin-left: 8px; }
.next { margin-top: 25px; }
.step { width: 202px; height: 50px; gap: 8px; padding-right: 1px; }
.steps { margin-bottom: 16px; }
.steps.four { margin-left: 9px; }
.terminal { width: 600px; height: 78px; margin: 8px 0 24px 1px; border-radius: 6px; overflow: hidden; background: #0f0f0f; color: #fff; }
.term-head { height: 32px; background: #3a3a3a; display: flex; gap: 2.300px; padding: 10px 0 0 4.500px; }
.term-head i { width: 9px; height: 9px; border-radius: 50%; background: #c2c3c4; }
.terminal pre { margin: 13px 0 0 15.500px; font: 14px/17px "Liberation Mono", monospace; }
.links { display: flex; gap: 16px; margin: .6px 0 0 1px; height: 17px; }
.links a { width: 42px; height: 42px; flex: none; border-radius: 50%; background: #fff; box-shadow: 0 0 3px rgba(0,0,0,.28); display: flex; align-items: center; justify-content: center; }
.scrollbar { width: 12px; background: #f2f1f0; padding: 3px 0 0 7px; }
.scrollbar i { display: block; height: 543px; background: #f29069; }
```
